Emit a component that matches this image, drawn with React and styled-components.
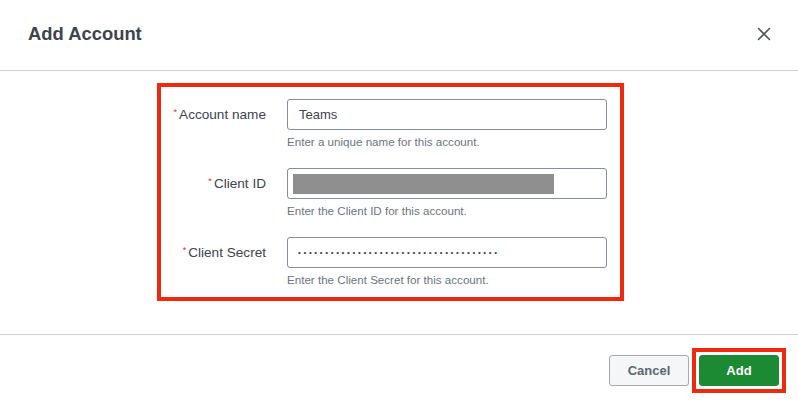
import React from 'react';
import styled, { createGlobalStyle } from 'styled-components';

const GlobalStyle = createGlobalStyle`
  html, body {
    margin: 0;
    padding: 0;
    background: #ffffff;
  }
  body {
    font-family: "Liberation Sans", Arial, sans-serif;
    color: #3c444d;
  }
`;

const Modal = styled.div`
  width: 798px;
  height: 406px;
  display: flex;
  flex-direction: column;
  background: #ffffff;
`;

const Header = styled.div`
  flex: 0 0 71px;
  display: flex;
  align-items: center;
  justify-content: space-between;
  padding: 0 27px 0 28px;
  border-bottom: 1px solid #c8cdd2;
  box-sizing: border-box;
`;

const Title = styled.h2`
  margin: 0;
  font-size: 18.4px;
  font-weight: 700;
  color: #3c444d;
  padding-bottom: 2px;
`;

const CloseButton = styled.button`
  width: 14px;
  height: 14px;
  padding: 0;
  border: none;
  background: none;
  display: flex;
  align-items: center;
  justify-content: center;
  margin-top: -3px;
  cursor: pointer;
`;

const Body = styled.div`
  flex: 1;
  padding: 12px 0 0 157px;
  border-bottom: 1px solid #c8cdd2;
`;

const Highlight = styled.div`
  border: 4px solid #ee2a0e;
  display: ${(p) => (p.$inline ? 'inline-flex' : 'block')};
  width: ${(p) => (p.$inline ? 'auto' : '447px')};
  padding: ${(p) => p.$pad};
  box-sizing: content-box;
`;

const Form = styled.div`
  display: flex;
  flex-direction: column;
  gap: 19px;
`;

const Row = styled.div`
  display: grid;
  grid-template-columns: 105px 320px;
  column-gap: 21px;
`;

const Label = styled.label`
  height: 31px;
  display: flex;
  align-items: center;
  justify-content: flex-end;
  font-size: 13.6px;
  color: #3c444d;
  white-space: nowrap;
`;

const Required = styled.span`
  color: #e0301e;
  font-size: 9px;
  align-self: flex-start;
  margin-top: 8px;
  margin-right: 2px;
`;

const FieldColumn = styled.div`
  display: flex;
  flex-direction: column;
`;

const Field = styled.div`
  height: 31px;
  box-sizing: border-box;
  border: 1px solid #868e96;
  border-radius: 3px;
  display: flex;
  align-items: center;
  padding: 0 11px;
  font-size: 13px;
  color: #3c444d;
  background: #ffffff;
`;

const Redacted = styled.span`
  display: block;
  width: 261px;
  height: 20px;
  margin-left: -6px;
  background: #8f8f8f;
`;

const Dots = styled.span`
  font-size: 8px;
  letter-spacing: 2.65px;
  color: #3c444d;
  margin-left: -1px;
`;

const Help = styled.div`
  margin-top: 5px;
  font-size: 11.6px;
  line-height: 14px;
  color: #6b7480;
`;

const Footer = styled.div`
  flex: 0 0 71px;
  display: flex;
  align-items: center;
  justify-content: flex-end;
  padding-right: 12px;
`;

const Button = styled.button`
  width: 80px;
  height: 31px;
  border-radius: 3px;
  font-family: "Liberation Sans", Arial, sans-serif;
  font-size: 13px;
  font-weight: 700;
  cursor: pointer;
  border: 1px solid ${(p) => (p.$primary ? '#1c8a33' : '#a3aab2')};
  background: ${(p) => (p.$primary ? '#1c8a33' : '#f4f6f8')};
  color: ${(p) => (p.$primary ? '#ffffff' : '#5c6670')};
  margin-right: ${(p) => (p.$primary ? '0' : '3px')};
`;

const fields = [
  { label: 'Account name', help: 'Enter a unique name for this account.', value: 'Teams' },
  { label: 'Client ID', help: 'Enter the Client ID for this account.', redacted: true },
  { label: 'Client Secret', help: 'Enter the Client Secret for this account.', secret: true },
];

function CloseIcon() {
  return (
    <svg width="14" height="14" viewBox="0 0 14 14" aria-hidden="true">
      <path d="M1.5 1.5 L12.5 12.5 M12.5 1.5 L1.5 12.5" stroke="#4d5560" strokeWidth="1.6" strokeLinecap="round" />
    </svg>
  );
}

export default function App() {
  return (
    <>
      <GlobalStyle />
      <Modal role="dialog" aria-label="Add Account">
        <Header>
          <Title>Add Account</Title>
          <CloseButton aria-label="Close">
            <CloseIcon />
          </CloseButton>
        </Header>
        <Body>
          <Highlight $pad="12px 12px 10px 0">
            <Form>
              {fields.map((f) => (
                <Row key={f.label}>
                  <Label>
                    <Required>*</Required>
                    {f.label}
                  </Label>
                  <FieldColumn>
                    <Field>
                      {f.value}
                      {f.redacted && <Redacted />}
                      {f.secret && <Dots>{'•'.repeat(37)}</Dots>}
                    </Field>
                    <Help>{f.help}</Help>
                  </FieldColumn>
                </Row>
              ))}
            </Form>
          </Highlight>
        </Body>
        <Footer>
          <Button>Cancel</Button>
          <Highlight $inline $pad="3px">
            <Button $primary>Add</Button>
          </Highlight>
        </Footer>
      </Modal>
    </>
  );
}
